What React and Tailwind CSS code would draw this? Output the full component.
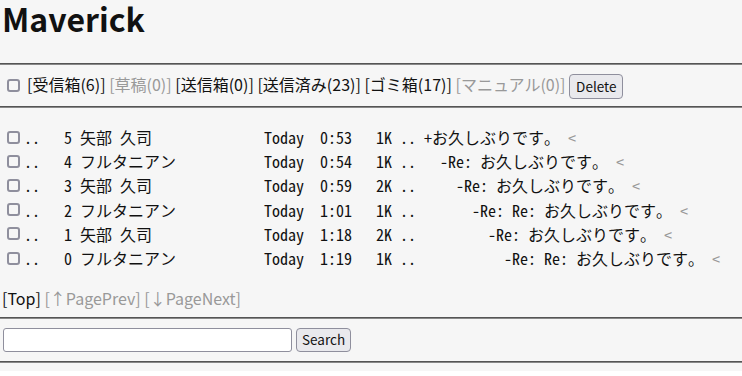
const rows = [
  { n: 5, from: "矢部 久司", w: 9, time: "0:53", size: "1K", subj: "+お久しぶりです。", indent: 0 },
  { n: 4, from: "フルタニアン", w: 12, time: "0:54", size: "1K", subj: "-Re: お久しぶりです。", indent: 2 },
  { n: 3, from: "矢部 久司", w: 9, time: "0:59", size: "2K", subj: "-Re: お久しぶりです。", indent: 4 },
  { n: 2, from: "フルタニアン", w: 12, time: "1:01", size: "1K", subj: "-Re: Re: お久しぶりです。", indent: 6 },
  { n: 1, from: "矢部 久司", w: 9, time: "1:18", size: "2K", subj: "-Re: お久しぶりです。", indent: 8 },
  { n: 0, from: "フルタニアン", w: 12, time: "1:19", size: "1K", subj: "-Re: Re: お久しぶりです。", indent: 10 },
];

const Box = () => (
  <span className="inline-block w-[13px] h-[13px] border-2 border-[#8f8f9d] rounded-[3px] bg-[#f6f6f6] shrink-0" />
);

const Rule = ({ className = "" }) => (
  <div className={"h-[2px] border-t border-t-[#555] border-b border-b-[#888] " + className} />
);

const Folder = ({ children, dim }) => (
  <span className={dim ? "text-[#999]" : "text-[#111]"}>[{children}]</span>
);

export default function App() {
  return (
    <div className="min-h-screen w-full bg-[#f6f6f6] text-[#111] font-['Noto_Sans_CJK_JP','Noto_Sans',sans-serif]">
      <h1 className="text-[32px] font-bold leading-[46px] -mt-[5px] px-[2px]">Maverick</h1>

      <Rule className="mt-[22px]" />
      <div className="flex items-center h-[41px] text-[16px]">
        <span className="ml-[7px] mr-[7px] flex"><Box /></span>
        <span className="whitespace-pre">
          <Folder>受信箱(6)</Folder>{" "}
          <Folder dim>草稿(0)</Folder>{" "}
          <Folder>送信箱(0)</Folder>{" "}
          <Folder>送信済み(23)</Folder>{" "}
          <Folder>ゴミ箱(17)</Folder>{" "}
          <Folder dim>マニュアル(0)</Folder>{" "}
          <button className="h-[25px] px-[6px] align-middle text-[13.5px] leading-none bg-[#e9e9ed] border border-[#8f8f9d] rounded-[4px] text-[#111]">
            Delete
          </button>
        </span>
      </div>
      <Rule />

      <div className="mt-[17px] font-['Noto_Sans_Mono_CJK_JP','DejaVu_Sans_Mono',monospace] text-[16px]">
        {rows.map((r) => (
          <div key={r.n} className="flex items-center h-[24.2px] whitespace-pre">
            <span className="ml-[7px] mr-[4px] flex"><Box /></span>
            <span>
              {"..   " + r.n + " " + r.from + " ".repeat(23 - r.w) + "Today  " + r.time + "   " + r.size + " .. " + " ".repeat(r.indent) + r.subj + " "}
            </span>
            <span className="text-[#999]">&lt;</span>
          </div>
        ))}
      </div>

      <div className="mt-[16px] h-[24px] flex items-center text-[16px] whitespace-pre px-[2px]">
        <span>[Top]</span>
        <span className="text-[#999]"> [↑PagePrev] [↓PageNext]</span>
      </div>

      <Rule className="mt-[7px]" />
      <div className="mt-[9px] flex items-center gap-[4px] px-[3px]">
        <input className="w-[289px] h-[24px] bg-white border border-[#8f8f9d] rounded-[3px] outline-none" />
        <button className="h-[24px] px-[5px] text-[13.5px] leading-none bg-[#e9e9ed] border border-[#8f8f9d] rounded-[4px] text-[#111]">
          Search
        </button>
      </div>
      <Rule className="mt-[9px]" />
    </div>
  );
}
